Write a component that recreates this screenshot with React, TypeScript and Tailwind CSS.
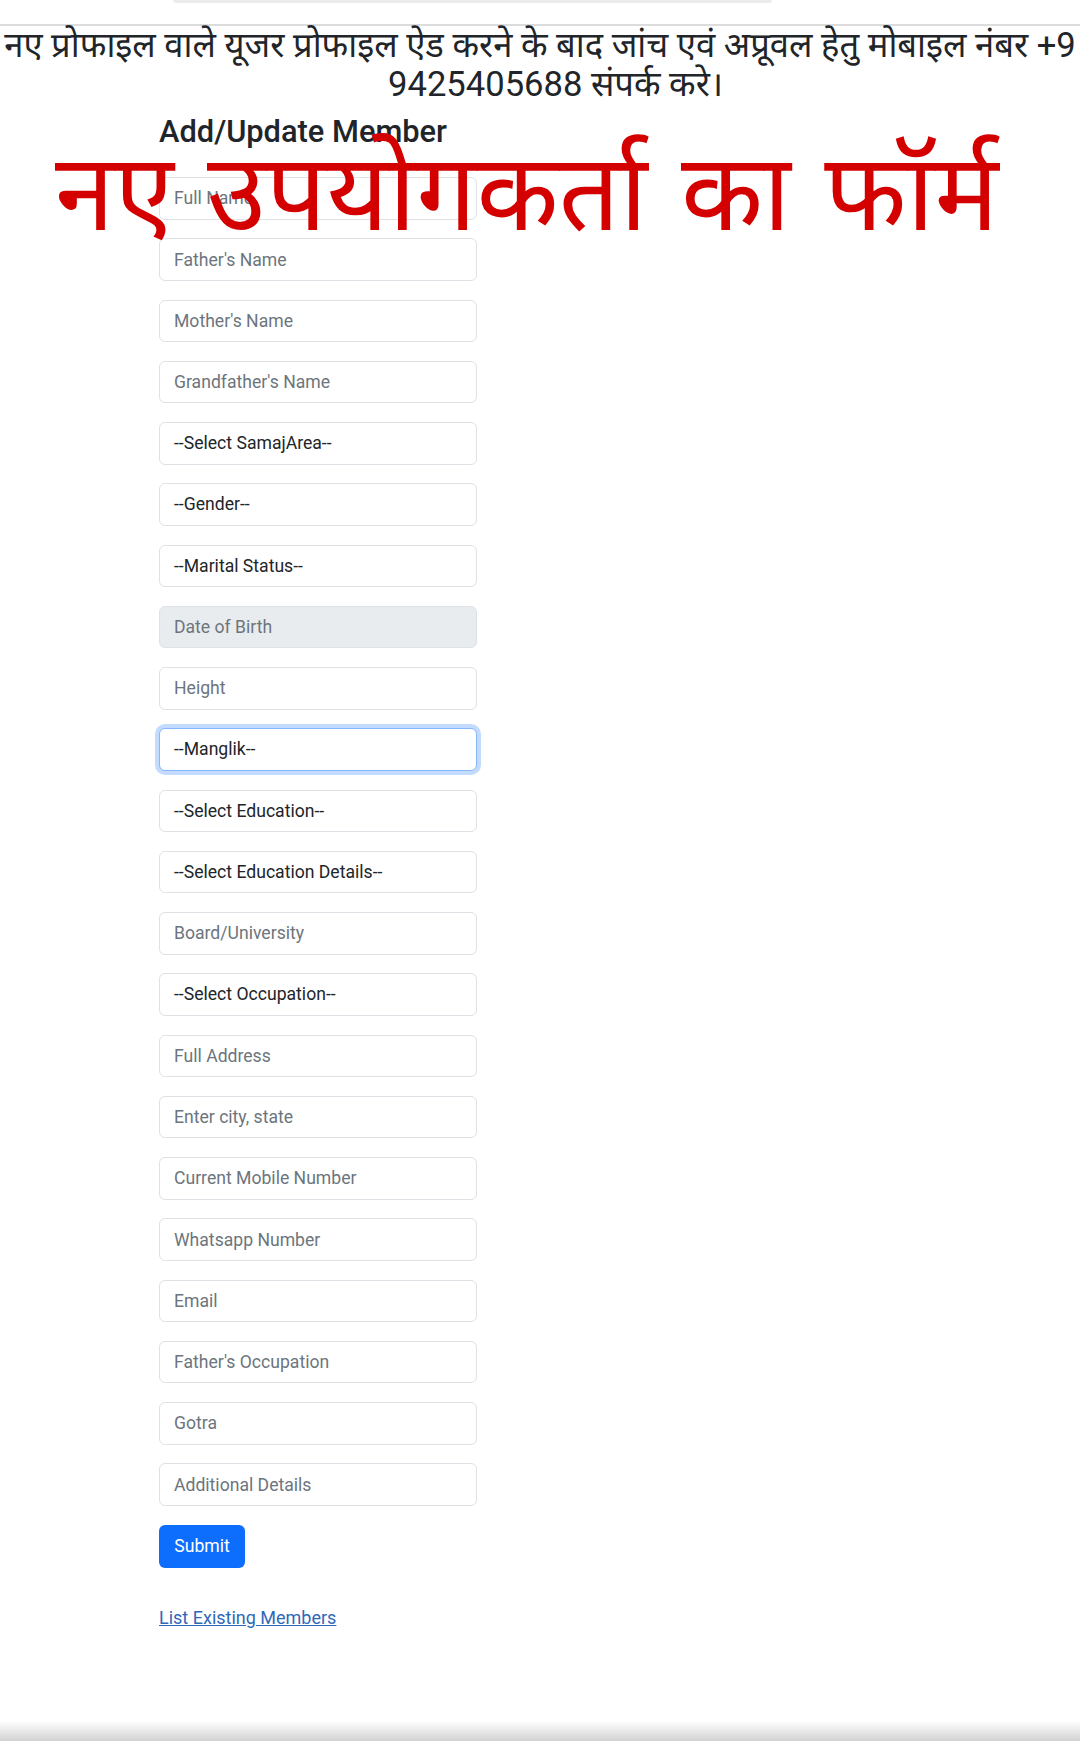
import React from 'react';

type Field = { label: string; kind: 'text' | 'select' | 'readonly' | 'focus' };

const fields: Field[] = [
  { label: "Full Name", kind: 'text' },
  { label: "Father's Name", kind: 'text' },
  { label: "Mother's Name", kind: 'text' },
  { label: "Grandfather's Name", kind: 'text' },
  { label: "--Select SamajArea--", kind: 'select' },
  { label: "--Gender--", kind: 'select' },
  { label: "--Marital Status--", kind: 'select' },
  { label: "Date of Birth", kind: 'readonly' },
  { label: "Height", kind: 'text' },
  { label: "--Manglik--", kind: 'focus' },
  { label: "--Select Education--", kind: 'select' },
  { label: "--Select Education Details--", kind: 'select' },
  { label: "Board/University", kind: 'text' },
  { label: "--Select Occupation--", kind: 'select' },
  { label: "Full Address", kind: 'text' },
  { label: "Enter city, state", kind: 'text' },
  { label: "Current Mobile Number", kind: 'text' },
  { label: "Whatsapp Number", kind: 'text' },
  { label: "Email", kind: 'text' },
  { label: "Father's Occupation", kind: 'text' },
  { label: "Gotra", kind: 'text' },
  { label: "Additional Details", kind: 'text' },
];

const FormField = ({ field }: { field: Field }) => {
  if (field.kind === 'text' || field.kind === 'readonly') {
    return (
      <input
        type="text"
        readOnly={field.kind === 'readonly'}
        placeholder={field.label}
        className={`w-full h-[42.5px] px-[14px] rounded-[6px] border border-[#dee2e6] text-[17.6px] text-[#212529] placeholder:text-[#6c757d] outline-none ${
          field.kind === 'readonly' ? 'bg-[#e9ecef]' : 'bg-white'
        }`}
      />
    );
  }
  return (
    <select
      defaultValue=""
      className={`w-full h-[42.5px] px-[14px] rounded-[6px] border bg-white text-[17.6px] text-[#212529] appearance-none outline-none ${
        field.kind === 'focus'
          ? 'border-[#86b7fe] shadow-[0_0_0_4px_rgba(13,110,253,0.25)]'
          : 'border-[#dee2e6]'
      }`}
    >
      <option value="">{field.label}</option>
    </select>
  );
};

const App = () => {
  return (
    <div
      className="relative h-[1741px] overflow-hidden bg-white flex flex-col"
      style={{ fontFamily: 'Roboto, "Noto Sans Devanagari", "Noto Sans", sans-serif' }}
    >
      {/* top search bar edge */}
      <div className="ml-[173px] w-[599px] h-[3px] rounded-b-[3px] bg-[#ececec]" />
      <div className="mt-[21px] h-[2px] bg-[#dcdcdc]" />

      {/* notice */}
      <div className="text-center text-[34.6px] leading-[39px] text-[#212529] whitespace-nowrap">
        <div>नए प्रोफाइल वाले यूजर प्रोफाइल ऐड करने के बाद जांच एवं अप्रूवल हेतु मोबाइल नंबर +9</div>
        <div className="pl-[31px]">9425405688 संपर्क करे।</div>
      </div>

      {/* form */}
      <div className="ml-[159px] w-[318px] mt-[9px]">
        <h3 className="text-[30.8px] leading-[37px] font-medium text-[#212529]">Add/Update Member</h3>
        <form className="mt-[27px] flex flex-col gap-[18.75px]" onSubmit={(e) => e.preventDefault()}>
          {fields.map((f) => (
            <FormField key={f.label} field={f} />
          ))}
          <div>
            <button
              type="submit"
              className="h-[43px] w-[86px] rounded-[6px] bg-[#0d6efd] text-white text-[17.6px]"
            >
              Submit
            </button>
          </div>
        </form>
        <a href="#" className="inline-block mt-[36px] text-[18px] text-[#2f68b8] underline">
          List Existing Members
        </a>
      </div>

      <div className="mt-auto h-[20px] bg-gradient-to-b from-white to-[#d2d2d2]" />

      {/* red annotation over the page */}
      <div className="absolute left-[55px] top-[140px] text-[#d40000] text-[107px] leading-none whitespace-nowrap [word-spacing:7px]">
        नए उपयोगकर्ता का फॉर्म
      </div>
    </div>
  );
};

export default App;
